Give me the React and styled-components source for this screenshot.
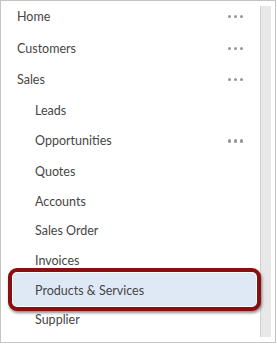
import React from "react";
import styled, { createGlobalStyle } from "styled-components";

const Global = createGlobalStyle`
  html, body { margin: 0; padding: 0; background: #ffffff; }
  body { font-family: Lato, "Open Sans", sans-serif; }
`;

const Frame = styled.div`
  box-sizing: border-box;
  width: 276px;
  height: 343px;
  border: 1px solid #c4c4c4;
  background: #ffffff;
  display: flex;
  overflow: hidden;
`;

const List = styled.ul`
  list-style: none;
  margin: 0;
  padding: 0;
  flex: 1;
  display: flex;
  flex-direction: column;
  position: relative;
`;

const Row = styled.li`
  position: relative;
  flex: none;
  height: ${(p) => (p.$more ? 31.5 : 29.7)}px;
  display: flex;
  align-items: center;
  justify-content: space-between;
  padding: 0 17px 0 ${(p) => (p.$sub ? 34 : 16)}px;
  font-family: Lato, "Open Sans", sans-serif;
  font-size: 12.5px;
  color: #464646;

  ${(p) =>
    p.$highlight &&
    `
    &::before {
      content: "";
      position: absolute;
      left: 7px;
      right: -1px;
      top: -7px;
      bottom: -6px;
      box-sizing: border-box;
      border: 4px solid #8a0f0f;
      border-radius: 9px;
      background: #dfe9f6;
      box-shadow: inset 0 0 0 1px #ffffff, 1px 2px 3px rgba(0,0,0,0.45);
      z-index: 0;
    }
  `}
`;

const Label = styled.span`
  position: relative;
  z-index: 1;
`;

const Dots = styled.span`
  display: flex;
  gap: 2.6px;
  span {
    width: 3.4px;
    height: 3.4px;
    border-radius: 50%;
    background: #959595;
  }
`;

const Scrollbar = styled.div`
  width: 10px;
  margin: 5px 4px 5px 0;
  background: #e8e8e8;
  border-left: 1px solid #d2d2d2;
`;

const items = [
  { label: "Home", more: true },
  { label: "Customers", more: true },
  { label: "Sales", more: true },
  { label: "Leads", sub: true },
  { label: "Opportunities", sub: true, more: true },
  { label: "Quotes", sub: true },
  { label: "Accounts", sub: true },
  { label: "Sales Order", sub: true },
  { label: "Invoices", sub: true },
  { label: "Products & Services", sub: true, highlight: true },
  { label: "Supplier", sub: true },
];

export default function App() {
  return (
    <>
      <Global />
      <Frame>
        <List>
          {items.map((it) => (
            <Row
              key={it.label}
              $sub={it.sub}
              $more={it.more}
              $highlight={it.highlight}
            >
              <Label>{it.label}</Label>
              {it.more && (
                <Dots>
                  <span />
                  <span />
                  <span />
                </Dots>
              )}
            </Row>
          ))}
        </List>
        <Scrollbar />
      </Frame>
    </>
  );
}
